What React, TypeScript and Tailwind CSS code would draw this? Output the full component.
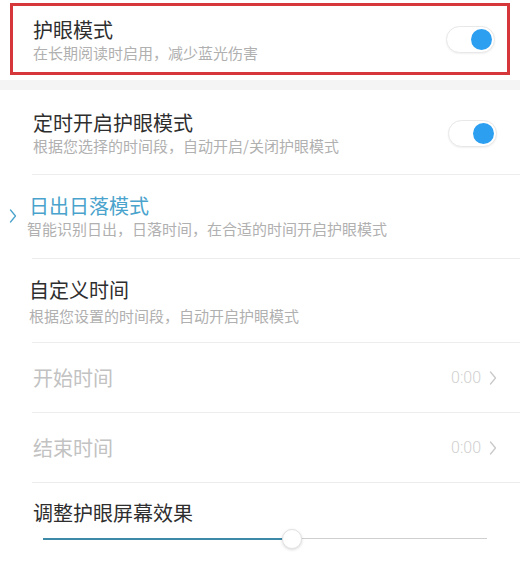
import React from 'react'

const cjk = 'font-["Noto_Sans_CJK_SC","Noto_Sans",sans-serif]'

const Toggle: React.FC<{ className?: string }> = ({ className = '' }) => (
  <div
    className={`relative w-[49px] h-[27px] rounded-full bg-white border border-[#e8e8e8] shadow-[0_1px_2px_rgba(0,0,0,0.06)] shrink-0 ${className}`}
  >
    <div className="absolute right-[2px] top-[2px] w-[21px] h-[21px] rounded-full bg-[#2d9ff0]" />
  </div>
)

const Chevron: React.FC<{ color: string; className?: string }> = ({ color, className = '' }) => (
  <svg width="8" height="14" viewBox="0 0 8 14" className={className} fill="none">
    <polyline points="1.5,1 6.5,7 1.5,13" stroke={color} strokeWidth="1.3" strokeLinecap="round" strokeLinejoin="round" />
  </svg>
)

const Divider = () => <div className="ml-[32px] h-px bg-[#ededed]" />

const TimeRow: React.FC<{ label: string; value: string }> = ({ label, value }) => (
  <div className="h-[69px] flex items-center justify-between pl-[33px] pr-[23px]">
    <span className="text-[20px] leading-[24px] text-[#c2c2c2]">{label}</span>
    <div className="flex items-center gap-[8px]">
      <span className="font-['Roboto',sans-serif] font-light text-[16px] leading-[20px] text-[#cfcfcf]">{value}</span>
      <Chevron color="#c9c9c9" />
    </div>
  </div>
)

const App: React.FC = () => {
  const level = 0.56

  return (
    <div className={`w-[520px] h-[568px] bg-white overflow-hidden ${cjk}`}>
      {/* main switch */}
      <div className="pt-[3px] px-[10px]">
        <div className="h-[72px] border-[3px] border-[#d6373b] flex items-start justify-between pl-[20px] pr-[12px]">
          <div className="pt-[12px]">
            <div className="text-[20px] leading-[24px] text-[#2e2e2e]">护眼模式</div>
            <div className="mt-[1px] text-[15px] leading-[20px] text-[#b0b0b0]">在长期阅读时启用，减少蓝光伤害</div>
          </div>
          <Toggle className="mt-[20px]" />
        </div>
      </div>
      <div className="h-[5px]" />
      <div className="h-[10px] bg-[#f4f4f4]" />

      {/* scheduled */}
      <div className="h-[84px] flex items-start justify-between pl-[33px] pr-[23px]">
        <div className="pt-[21px]">
          <div className="text-[20px] leading-[24px] text-[#2e2e2e]">定时开启护眼模式</div>
          <div className="mt-[1px] text-[15px] leading-[20px] text-[#b0b0b0]">根据您选择的时间段，自动开启/关闭护眼模式</div>
        </div>
        <Toggle className="mt-[30px]" />
      </div>
      <Divider />

      <div className="h-[83px] flex items-start pl-[9px]">
        <Chevron color="#4aa3cc" className="mt-[34px] mr-[12px]" />
        <div className="pt-[19px]">
          <div className="text-[20px] leading-[24px] text-[#4aa3cc]">日出日落模式</div>
          <div className="mt-[1px] -ml-[2px] text-[15px] leading-[20px] text-[#b0b0b0]">智能识别日出，日落时间，在合适的时间开启护眼模式</div>
        </div>
      </div>
      <Divider />

      <div className="h-[83px] pl-[29px] pt-[19px]">
        <div className="text-[20px] leading-[24px] text-[#2e2e2e]">自定义时间</div>
        <div className="mt-[4px] text-[15px] leading-[20px] text-[#b0b0b0]">根据您设置的时间段，自动开启护眼模式</div>
      </div>
      <Divider />

      <TimeRow label="开始时间" value="0:00" />
      <Divider />
      <TimeRow label="结束时间" value="0:00" />
      <Divider />

      {/* strength */}
      <div className="pl-[33px] pt-[18px]">
        <div className="text-[20px] leading-[24px] text-[#2e2e2e]">调整护眼屏幕效果</div>
        <div className="relative mt-[4px] ml-[10px] w-[444px] h-[20px]">
          <div className="absolute left-0 right-0 top-[9px] h-px bg-[#cfcfcf]" />
          <div className="absolute left-0 top-[9px] h-[2px] bg-[#3d89a8]" style={{ width: `${level * 100 - 2}%` }} />
          <div
            className="absolute top-0 w-[20px] h-[20px] rounded-full bg-white border border-[#e2e2e2] shadow-[0_1px_3px_rgba(0,0,0,0.15)]"
            style={{ left: `calc(${level * 100}% - 10px)` }}
          />
        </div>
      </div>
    </div>
  )
}

export default App
